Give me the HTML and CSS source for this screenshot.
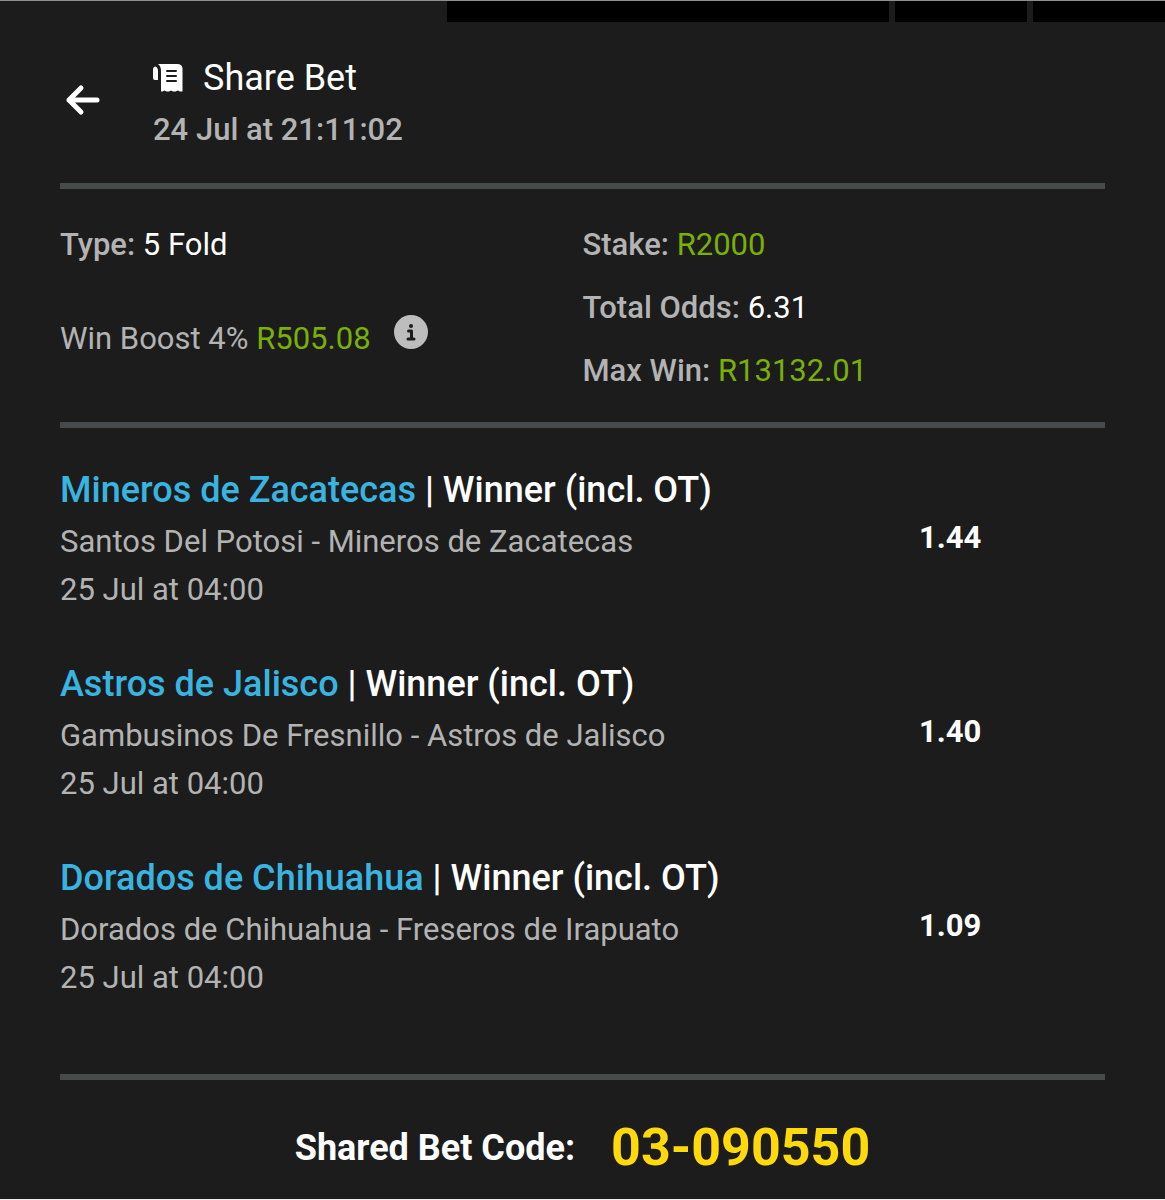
FILE: index.html
```html
<!DOCTYPE html>
<html lang="en">
<head>
    <meta charset="UTF-8">
    <meta name="viewport" content="width=device-width, initial-scale=1.0">
    <title>Share Bet</title>
    <link rel="stylesheet" href="styles.css">
</head>

<body>

    <!-- Top strip -->
    <div class="strip">
        <div></div>
        <div class="block"></div>
        <div class="block"></div>
        <div class="block"></div>
    </div>

    <main class="slip">

        <!-- Header -->
        <header class="header">
            <button type="button" class="back" aria-label="Back">
                <svg width="36" height="32" viewBox="0 0 36 32" fill="none" stroke="#fff" stroke-width="5" stroke-linecap="round" stroke-linejoin="round">
                    <path d="M32 16H4M16 4L4 16l12 12"/>
                </svg>
            </button>
            <div>
                <h1>
                    <svg width="30" height="28" viewBox="0 0 30 28">
                        <path fill="#fff" d="M0 6Q0 2.500 2.500 2.500Q5 3.500 5 7V16H2Q0 16 0 14ZM5 0H25Q29.500 0.500 29.500 5V27.500H27L25 26.500L22.500 27.500H20L18 26.500L16 27.500H13.500L11.500 26.500L9.500 27.500H8V7Q8 2 5 0Z"/>
                        <path stroke="#1c1c1c" stroke-width="2" stroke-linecap="round" d="M14 7h9M14 12h9M14 17h9"/>
                    </svg>
                    Share Bet
                </h1>
                <p class="placed">24 Jul at 21:11:02</p>
            </div>
        </header>

        <!-- Bet summary -->
        <section class="summary">
            <div class="left">
                <p><b>Type:</b> <span class="white">5 Fold</span></p>
                <p class="boost">
                    <span>Win Boost 4% <span class="green">R505.08</span></span>
                    <button type="button" class="info" aria-label="Win Boost info">
                        <svg width="34" height="34" viewBox="0 0 34 34">
                            <circle cx="17" cy="17" r="17" fill="#bdbdbd"/>
                            <circle cx="17" cy="11" r="2" fill="#1c1c1c"/>
                            <path fill="none" stroke="#1c1c1c" stroke-width="3" stroke-linecap="round" stroke-linejoin="round" d="M14.500 16H17.500V24M14 24H20"/>
                        </svg>
                    </button>
                </p>
            </div>
            <div class="right">
                <p><b>Stake:</b> <span class="green">R2000</span></p>
                <p><b>Total Odds:</b> <span class="white">6.31</span></p>
                <p><b>Max Win:</b> <span class="green">R13132.01</span></p>
            </div>
        </section>

        <!-- Selections -->
        <section class="bets">
            <article class="bet">
                <div class="details">
                    <h2><span class="team">Mineros de Zacatecas</span> | Winner (incl. OT)</h2>
                    <p>Santos Del Potosi - Mineros de Zacatecas</p>
                    <p>25 Jul at 04:00</p>
                </div>
                <div class="odds">1.44</div>
            </article>
            <article class="bet">
                <div class="details">
                    <h2><span class="team">Astros de Jalisco</span> | Winner (incl. OT)</h2>
                    <p>Gambusinos De Fresnillo - Astros de Jalisco</p>
                    <p>25 Jul at 04:00</p>
                </div>
                <div class="odds">1.40</div>
            </article>
            <article class="bet">
                <div class="details">
                    <h2><span class="team">Dorados de Chihuahua</span> | Winner (incl. OT)</h2>
                    <p>Dorados de Chihuahua - Freseros de Irapuato</p>
                    <p>25 Jul at 04:00</p>
                </div>
                <div class="odds">1.09</div>
            </article>
        </section>

        <!-- Shared code -->
        <footer class="footer">
            <span>Shared Bet Code:</span>
            <span class="code">03-090550</span>
        </footer>

    </main>

</body>
</html>
```

FILE: styles.css
```css
* {
    box-sizing: border-box;
}

body {
    font-family: Roboto, Arial, sans-serif;
    font-size: 31px;
    line-height: 48px;
    margin: 0;
    min-height: 100vh;
    background-color: #1c1c1c;
    color: #b3b3b3;
    border-top: 1px solid #8c8f8f;
    border-bottom: 1px solid #f0f0f0;
}

h1, h2, p {
    margin: 0;
}

button {
    background: none;
    border: none;
    padding: 0;
    cursor: pointer;
}

svg {
    display: block;
}

b {
    font-weight: 500;
}

/* Top strip */
.strip {
    display: grid;
    grid-template-columns: 441fr 442fr 132fr 132fr;
    gap: 6px;
    height: 21px;
}

.block {
    background-color: #000;
}

.slip {
    padding: 0 60px;
}

/* Header */
.header {
    display: flex;
    align-items: center;
    gap: 52px;
    padding: 30px 5px 27px;
    border-bottom: 6px solid #454b4b;
}

.back {
    padding-bottom: 8px;
}

.header h1 {
    display: flex;
    align-items: center;
    gap: 20px;
    color: #fff;
    font-size: 36px;
    font-weight: 400;
    line-height: 52px;
}

.placed {
    font-weight: 500;
    line-height: 52px;
}

/* Bet summary */
.summary {
    display: grid;
    grid-template-columns: 1fr 1fr;
    padding: 24px 0 20px;
    border-bottom: 6px solid #454b4b;
}

.summary p {
    line-height: 63px;
}

.left {
    display: flex;
    flex-direction: column;
    gap: 31px;
}

.boost {
    display: flex;
    gap: 23px;
}

.info {
    align-self: flex-start;
    padding-top: 8px;
}

.white {
    color: #fff;
}

.green {
    color: #7ab005;
}

/* Selections */
.bets {
    display: flex;
    flex-direction: column;
    gap: 42px;
    padding: 34px 0 72px;
    border-bottom: 6px solid #454b4b;
}

.bet {
    display: grid;
    grid-template-columns: 859fr 186fr;
    align-items: center;
}

.bet h2 {
    color: #fff;
    font-size: 36px;
    font-weight: 500;
    line-height: 56px;
}

.team {
    color: #39b4e0;
}

.odds {
    color: #fff;
    font-weight: 700;
}

/* Shared code */
.footer {
    display: flex;
    align-items: center;
    justify-content: center;
    gap: 36px;
    padding-top: 44px;
    color: #fff;
    font-size: 36px;
    font-weight: 700;
}

.code {
    color: #ffd90a;
    font-size: 52px;
}
```
